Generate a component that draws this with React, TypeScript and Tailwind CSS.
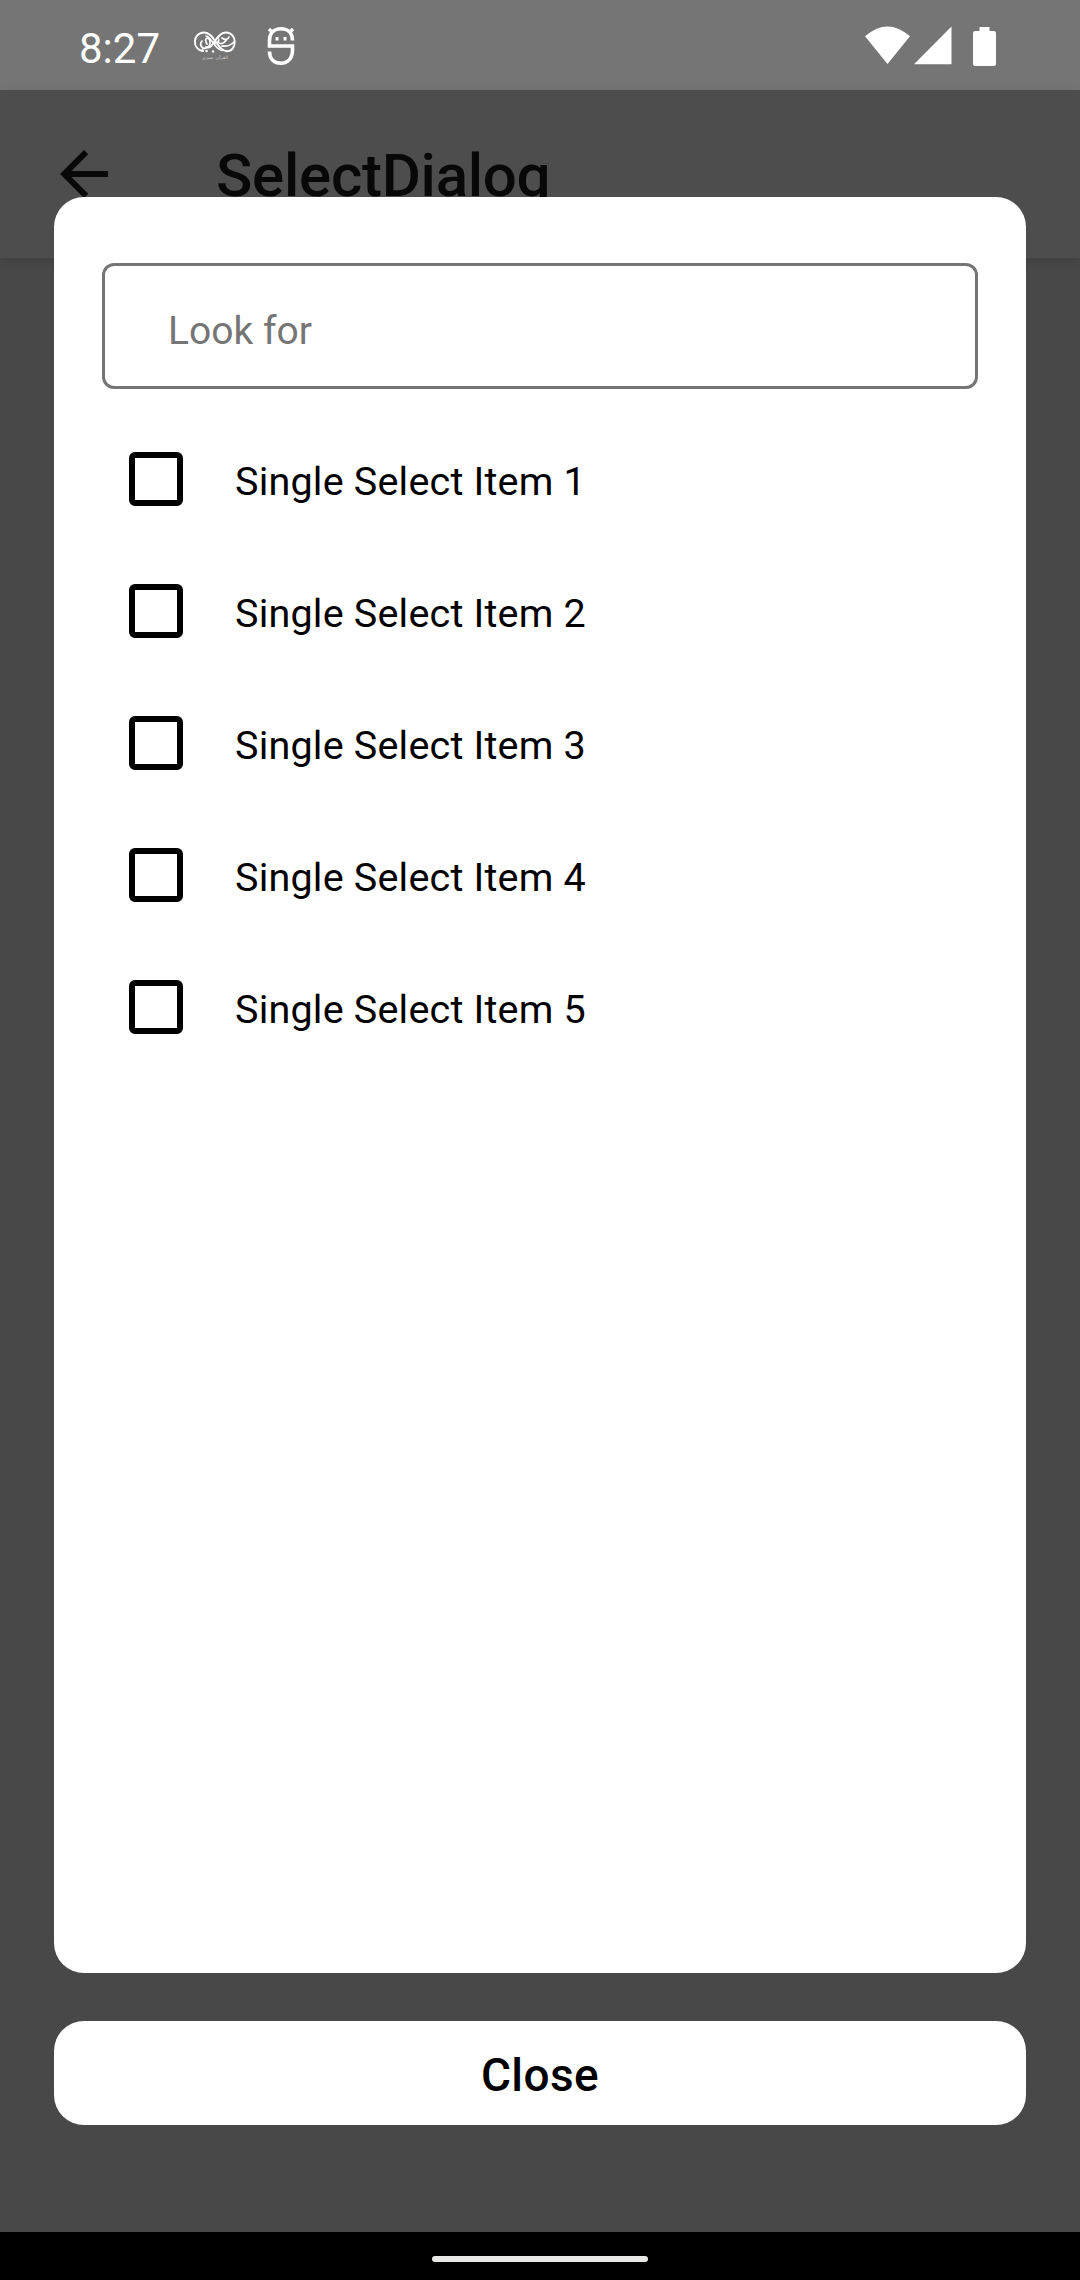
const items = [
  'Single Select Item 1',
  'Single Select Item 2',
  'Single Select Item 3',
  'Single Select Item 4',
  'Single Select Item 5',
];

function KnotIcon() {
  return (
    <svg className="ml-[33px] h-[34px] w-[44px] overflow-visible" viewBox="193 30 44 34" fill="none" stroke="#fff" strokeLinecap="round">
      <path d="M203 52C192 51 192 34 204 33.500C214 33 217 52 227 52.300C237 52 238 34 226 33.500C216 33 213 52 206 48" strokeWidth="1.9" />
      <path d="M206 37C212 38 214 50 222 51.500M207 45C203 39 209 37 210 42C211 48 204 52 201 47Q200 44 202 42M213 43C216 46 218 43 219 41M219 44C222 46 225 43 227 40M222 39C225 41 228 41 229 38M222 47Q229 48 234 43" strokeWidth="1.7" />
      <path d="M202.500 51.500h.1M206.500 52h.1M213 52.500h.1M218 38.500h.1" strokeWidth="2.4" />
      <text x="215" y="60" textAnchor="middle" fontSize="4.500" fontFamily="DejaVu Sans, sans-serif" fill="#d0d0d0" stroke="none">القرآن .صبري</text>
    </svg>
  );
}

function RobotIcon() {
  return (
    <svg className="ml-[30px] h-[40px] w-[28px]" viewBox="267 27 28 40" fill="none" stroke="#fff">
      <path d="M292.500 41.500C292.500 34 288 29.800 281 29.800S269.500 34 269.500 41.500V47H292.500V51C292.500 59 288 64.200 281 64.200S269.500 60 269.500 52.500" strokeWidth="3.6" />
      <path d="M269 30l4 4M293 30l-4 4" strokeWidth="3.2" />
      <path d="M277 38v3.400M285 38v3.400" strokeWidth="3" />
    </svg>
  );
}

function SystemIcons() {
  return (
    <svg className="h-[42px] w-[134px]" viewBox="864 25 134 42" fill="#fff">
      <path d="M865 36.300Q887.500 16.600 910 36.300L887.500 64Z" />
      <path d="M914 64.200L951.500 26.500V64.200Z" />
      <path d="M979.500 27H989.500V31H994Q996 31 996 33V64Q996 66 994 66H975Q973 66 973 64V33Q973 31 975 31H979.500Z" />
    </svg>
  );
}

function SelectRow({ label }: { label: string }) {
  return (
    <label className="flex h-[132px] items-center pl-[27px]">
      <span className="size-[54px] rounded-[6px] border-[6px] border-black" />
      <span className="ml-[52px] pt-[5px] text-[39.5px] leading-[46px] tracking-[0.2px] whitespace-nowrap text-black">{label}</span>
    </label>
  );
}

export default function App() {
  return (
    <div className="relative flex h-[2280px] w-[1080px] flex-col overflow-hidden bg-[#484848] font-[Roboto,sans-serif]">
      <header className="flex h-[90px] shrink-0 items-center bg-[#757575] pt-[2px] pr-[82px] pl-[79px]">
        <span className="w-[81px] pt-[5px] text-[42px] leading-[50px] text-white">8:27</span>
        <KnotIcon />
        <RobotIcon />
        <div className="ml-auto">
          <SystemIcons />
        </div>
      </header>
      <div className="flex h-[168px] shrink-0 items-center bg-[#4d4d4d] pl-[48px] shadow-[0_3px_9px_rgba(0,0,0,0.12)]">
        <svg className="size-[72px]" viewBox="0 0 24 24" fill="#080808">
          <path d="M20 11H7.830l5.590-5.590L12 4l-8 8 8 8 1.410-1.410L7.830 13H20z" />
        </svg>
        <h1 className="ml-[96px] pt-[4px] text-[60px] leading-[70px] font-medium tracking-[-0.25px] text-[#080808]">SelectDialog</h1>
      </div>
      <div className="flex-1" />
      <footer className="flex h-[48px] shrink-0 items-center justify-center bg-black">
        <div className="mt-[6px] h-[6px] w-[216px] rounded-full bg-[#e8e8e6]" />
      </footer>
      <div className="absolute inset-x-0 top-[197px] flex flex-col gap-[48px] px-[54px]" role="dialog">
        <section className="flex h-[1776px] flex-col rounded-[30px] bg-white px-[48px] pt-[66px]">
          <div className="flex h-[126px] items-center rounded-[12px] border-[3px] border-[#757575] pt-[10px] pl-[63px] text-[39px] leading-[46px] text-[#757575]">
            Look for
          </div>
          <div className="mt-[24px] flex flex-col">
            {items.map((item) => (
              <SelectRow key={item} label={item} />
            ))}
          </div>
        </section>
        <button className="flex h-[104px] items-center justify-center rounded-[30px] bg-white pt-[4px] text-[46px] leading-[56px] font-medium tracking-[0.4px] text-black">
          Close
        </button>
      </div>
    </div>
  );
}
